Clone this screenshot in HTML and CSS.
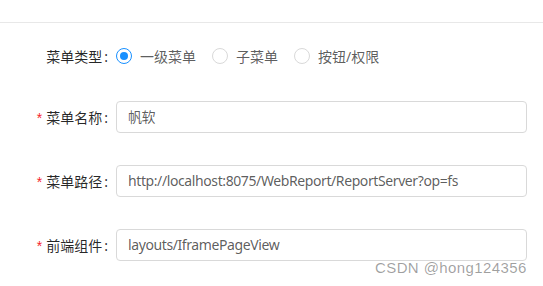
FILE: index.html
```html
<html>
  <head>
    <link rel="stylesheet" href="styles.css">
    <title>菜单编辑</title>
  </head>
  <body>
    <div class="panel">
      <div class="divider"></div>

      <form class="menu-form">
        <div class="form-row radio-row">
          <label class="form-label">菜单类型</label>
          <div class="form-control radios">
            <label class="radio checked"><span class="radio-dot"></span>一级菜单</label>
            <label class="radio"><span class="radio-dot"></span>子菜单</label>
            <label class="radio"><span class="radio-dot"></span>按钮/权限</label>
          </div>
        </div>

        <div class="form-row first-input">
          <label class="form-label required">菜单名称</label>
          <div class="form-control">
            <div class="text-input">帆软</div>
          </div>
        </div>

        <div class="form-row">
          <label class="form-label required">菜单路径</label>
          <div class="form-control">
            <div class="text-input">http://localhost:8075/WebReport/ReportServer?op=fs</div>
          </div>
        </div>

        <div class="form-row">
          <label class="form-label required">前端组件</label>
          <div class="form-control">
            <div class="text-input">layouts/IframePageView</div>
          </div>
        </div>
      </form>

      <div class="watermark">CSDN @hong124356</div>
    </div>
  </body>
</html>
```

FILE: styles.css
```css
/* Form panel, antd-like look */
body {
    margin: 0;
    padding: 0;
    background-color: #fff;
    font-family: "Noto Sans", "Noto Sans CJK SC", sans-serif;
    font-size: 14px;
}

.panel {
    position: relative;
    width: 543px;
    height: 286px;
    overflow: hidden;
}

.divider {
    height: 1px;
    margin-top: 22px;
    background-color: #e8e8e8;
}

.menu-form {
    padding: 0 16px 0 0;
}

.form-row {
    display: flex;
    align-items: center;
    height: 32px;
    margin-top: 32px;
}

.radio-row {
    margin-top: 17px;
}

.first-input {
    margin-top: 29px;
}

.form-label {
    width: 116px;
    padding-right: 8px;
    text-align: right;
    color: rgba(0, 0, 0, 0.85);
    white-space: nowrap;
    box-sizing: border-box;
}

.form-label::after {
    content: ":";
    margin: 0 0 0 2px;
}

.form-label.required::before {
    content: "*";
    color: #f5222d;
    margin-right: 4px;
    font-family: SimSun, "Liberation Sans", sans-serif;
}

.form-control {
    flex: 1;
}

/* Radio group */
.radios {
    display: flex;
    align-items: center;
}

.radio {
    display: flex;
    align-items: center;
    margin-right: 16px;
    color: rgba(0, 0, 0, 0.65);
}

.radio-dot {
    position: relative;
    width: 16px;
    height: 16px;
    box-sizing: border-box;
    border: 1px solid #d9d9d9;
    border-radius: 50%;
    margin-right: 8px;
}

.radio.checked .radio-dot {
    border-color: #1890ff;
}

.radio.checked .radio-dot::after {
    content: "";
    position: absolute;
    left: 3px;
    top: 3px;
    width: 8px;
    height: 8px;
    border-radius: 50%;
    background-color: #1890ff;
}

/* Text input */
.text-input {
    height: 32px;
    box-sizing: border-box;
    padding: 0 11px;
    border: 1px solid #d9d9d9;
    border-radius: 4px;
    line-height: 30px;
    color: rgba(0, 0, 0, 0.65);
    letter-spacing: -0.4px;
    white-space: nowrap;
}

.watermark {
    position: absolute;
    left: 375px;
    top: 259px;
    font-family: "Liberation Sans", sans-serif;
    font-size: 15px;
    color: rgba(0, 0, 0, 0.38);
    letter-spacing: 0.4px;
}
```
